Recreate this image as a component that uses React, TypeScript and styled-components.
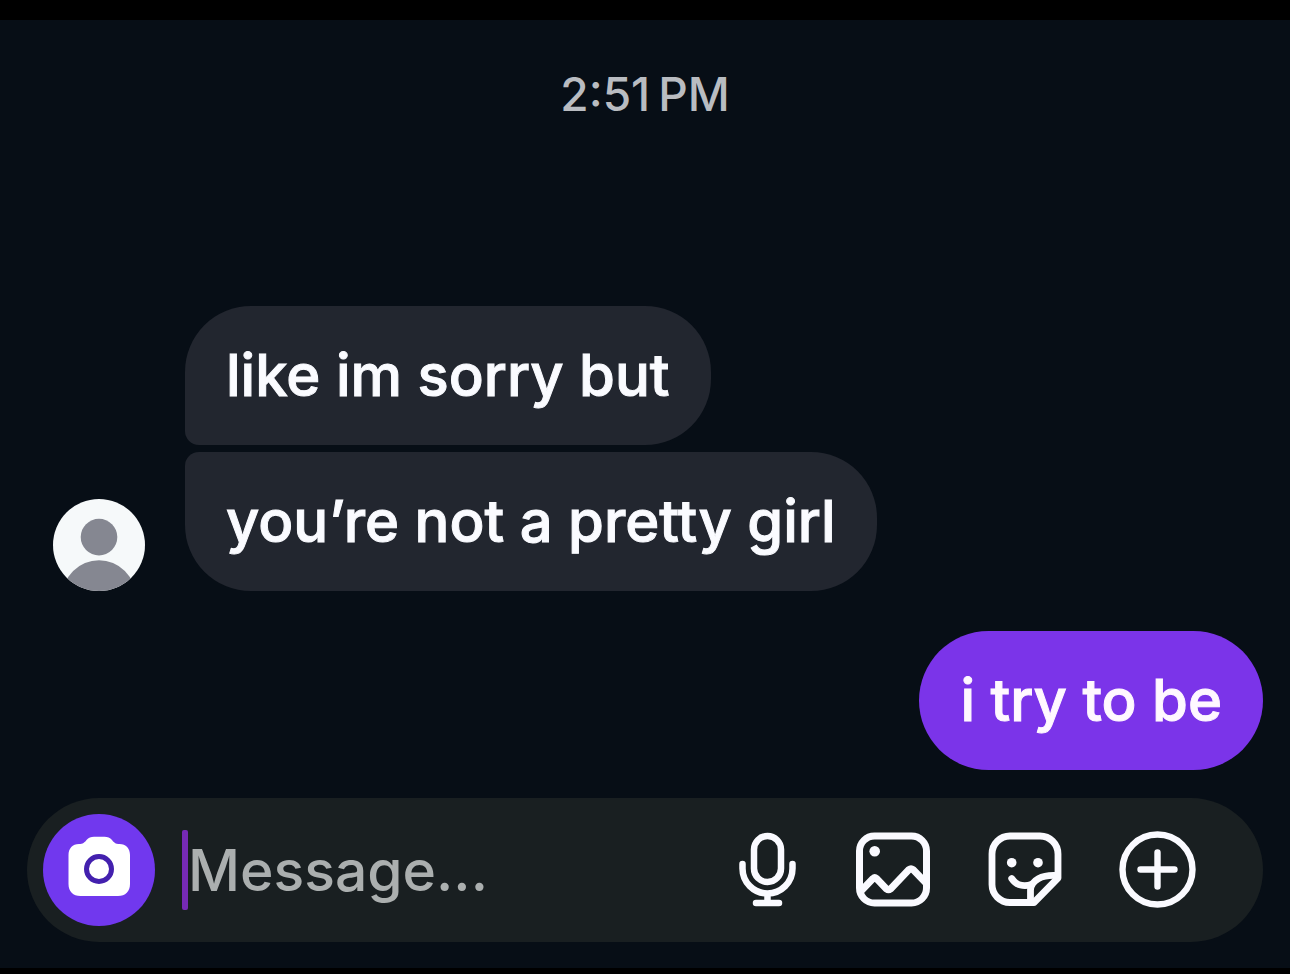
import React from "react";
import styled, { createGlobalStyle, css } from "styled-components";

const GlobalStyle = createGlobalStyle`
  *, *::before, *::after { box-sizing: border-box; }
  body {
    margin: 0;
    background: #070e16;
    font-family: Inter, "Liberation Sans", sans-serif;
  }
`;

const Screen = styled.main`
  display: flex;
  flex-direction: column;
  min-height: 100vh;
  padding: 50px 27px 26px;
  border-top: 20px solid #000;
  border-bottom: 6px solid #000;
  background: #070e16;
`;

const Timestamp = styled.time`
  align-self: center;
  color: #b9bcc1;
  font-size: 46px;
  font-weight: 500;
  line-height: 48px;
`;

const Thread = styled.section`
  display: flex;
  flex-direction: column;
  gap: 40px;
  margin-top: auto;
  margin-bottom: 28px;
`;

const IncomingGroup = styled.div`
  display: flex;
  align-items: flex-end;
  gap: 40px;
  padding-left: 26px;
`;

const BubbleStack = styled.div`
  display: flex;
  flex-direction: column;
  align-items: flex-start;
  gap: 7px;
`;

type Variant = "first" | "last" | "own";

const Bubble = styled.p<{ $variant: Variant }>`
  margin: 0;
  padding: 34px 41px 35px;
  border-radius: 66px;
  background: #22262f;
  color: #fafbff;
  font-size: 58px;
  font-weight: 500;
  line-height: 70px;
  -webkit-text-stroke: 1px currentColor;
  ${({ $variant }) => $variant === "first" && css`border-bottom-left-radius: 14px;`}
  ${({ $variant }) => $variant === "last" && css`border-top-left-radius: 14px;`}
  ${({ $variant }) =>
    $variant === "own" &&
    css`
      align-self: flex-end;
      border-radius: 70px;
      background: #7b34e9;
      color: #fff8ff;
    `}
`;

const Avatar = styled.svg`
  flex: none;
  width: 92px;
  height: 92px;
`;

const Composer = styled.form`
  display: flex;
  align-items: center;
  padding: 16px 66px 16px 16px;
  border-radius: 72px;
  background: #191f21;
`;

const CameraButton = styled.button`
  flex: none;
  width: 112px;
  height: 112px;
  padding: 0;
  border: 0;
  border-radius: 50%;
  background: #7138ee;
`;

const Field = styled.label`
  display: flex;
  flex: 1;
  align-items: center;
  min-width: 0;
  margin-left: 27px;
`;

const Caret = styled.span`
  flex: none;
  width: 6px;
  height: 80px;
  border-radius: 2px;
  background: #762ab5;
`;

const MessageInput = styled.input`
  flex: 1;
  min-width: 0;
  height: 80px;
  padding: 0;
  border: 0;
  outline: 0;
  background: transparent;
  color: #fafbff;
  font-family: inherit;
  font-size: 57px;
  font-weight: 500;
  &::placeholder {
    color: #abafaf;
    opacity: 1;
  }
`;

const Tools = styled.div`
  display: flex;
  flex: none;
  gap: 52px;
`;

const ToolButton = styled.button<{ $narrow?: boolean }>`
  width: ${({ $narrow }) => ($narrow ? 68 : 80)}px;
  height: 80px;
  padding: 0;
  border: 0;
  background: none;
`;

const Icon = styled.svg<{ $stroke?: number }>`
  display: block;
  width: 100%;
  height: 100%;
  fill: none;
  stroke: #fafaff;
  stroke-width: ${({ $stroke = 7 }) => $stroke};
  stroke-linecap: round;
  stroke-linejoin: round;
`;

export default function App() {
  return (
    <>
      <GlobalStyle />
      <Screen>
        <Timestamp dateTime="14:51">2:51{"\u2009"}PM</Timestamp>

        <Thread aria-label="Messages">
          <IncomingGroup>
            <Avatar viewBox="0 0 93 93" role="img" aria-label="Profile picture">
              <defs>
                <clipPath id="avatar-circle">
                  <circle cx="46.5" cy="46.5" r="46.5" />
                </clipPath>
              </defs>
              <g clipPath="url(#avatar-circle)">
                <rect width="93" height="93" fill="#f6f9fa" />
                <circle cx="46.5" cy="38.5" r="18.5" fill="#858791" />
                <circle cx="46.5" cy="99" r="37" fill="#858791" />
              </g>
            </Avatar>
            <BubbleStack>
              <Bubble $variant="first">like im sorry but</Bubble>
              <Bubble $variant="last">you’re not a pretty girl</Bubble>
            </BubbleStack>
          </IncomingGroup>
          <Bubble $variant="own">i try to be</Bubble>
        </Thread>

        <Composer onSubmit={(e) => e.preventDefault()}>
          <CameraButton type="button" aria-label="Camera">
            <Icon viewBox="0 0 112 112" $stroke={5}>
              <path
                d="M36 30C40 30 41.5 28.5 43.5 26C45.5 23.5 48 22.7 51 22.7H61.5C64.5 22.7 67 23.5 69 26C71 28.5 72.5 30 76.5 30C83 30 87 34.5 87 41V70C87 77.5 82.5 82 75 82H37.5C30 82 25.5 77.5 25.5 70V41C25.5 34.5 29.5 30 36 30Z"
                fill="#fff"
                stroke="none"
              />
              <circle cx="56" cy="55" r="12.5" stroke="#4320ae" />
            </Icon>
          </CameraButton>
          <Field>
            <Caret />
            <MessageInput type="text" placeholder="Message..." aria-label="Message" />
          </Field>
          <Tools>
            <ToolButton $narrow type="button" aria-label="Record voice message">
              <Icon viewBox="0 0 68 80" $stroke={6.5}>
                <rect x="21" y="6" width="27" height="46" rx="13.5" />
                <path d="M9.5 34V38.5A25 25 0 0 0 59.5 38.5V34M34.5 64V72M23 73H46" />
              </Icon>
            </ToolButton>
            <ToolButton type="button" aria-label="Choose photo">
              <Icon viewBox="0 0 80 80">
                <rect x="6.5" y="6" width="67" height="67" rx="15" />
                <path d="M8 61L20 48.5Q21.7 47 23.5 48.5L33.5 59Q35.5 60.5 37.5 59L56 39.5Q58 38 60 39.5L73 53" />
                <circle cx="21.7" cy="21.3" r="5.3" fill="#fafaff" stroke="none" />
              </Icon>
            </ToolButton>
            <ToolButton type="button" aria-label="Stickers">
              <Icon viewBox="0 0 80 80" $stroke={6.8}>
                <path d="M49 72.5H25A18 18 0 0 1 7 54.5V24A18 18 0 0 1 25 6H55A18 18 0 0 1 73 24V48Z" />
                <path d="M45.5 71V60C46 50 57 44.5 72 45.5" />
                <path d="M26.7 48.5C31.5 55.5 39 57 46.5 54.5" />
                <circle cx="26.7" cy="32.7" r="4.8" fill="#fafaff" stroke="none" />
                <circle cx="53" cy="32.7" r="4.8" fill="#fafaff" stroke="none" />
              </Icon>
            </ToolButton>
            <ToolButton type="button" aria-label="More options">
              <Icon viewBox="0 0 80 80" $stroke={6.4}>
                <circle cx="40.5" cy="39.5" r="35" />
                <path d="M23.5 39.5H57.5M40.5 22.5V56.5" />
              </Icon>
            </ToolButton>
          </Tools>
        </Composer>
      </Screen>
    </>
  );
}
